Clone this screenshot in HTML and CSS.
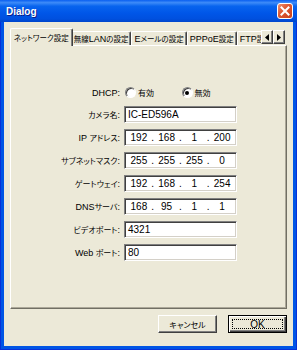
FILE: index.html
```html
<!DOCTYPE html>
<html lang="ja">

<head>
    <meta charset="UTF-8">
    <title>Dialog</title>
    <link rel="stylesheet" href="styles.css">
</head>

<body>
    <div class="window">
        <div class="titlebar">
            <span class="title">Dialog</span>
            <span class="close">
                <svg width="14" height="14" viewBox="0 0 14 14">
                    <path d="M3.5 3.5 L10.5 10.5 M10.5 3.5 L3.5 10.5" stroke="#fff" stroke-width="2" stroke-linecap="square" />
                </svg>
            </span>
        </div>

        <div class="client">
            <div class="tabstrip">
                <div class="tabs">
                    <div class="tab active"><span class="jp">ネットワーク設定</span></div>
                    <div class="tab"><span class="jp">無線</span>LAN<span class="jp">の設定</span></div>
                    <div class="tab">E<span class="jp">メールの設定</span></div>
                    <div class="tab">PPPoE<span class="jp">設定</span></div>
                    <div class="tab">FTP<span class="jp">設定</span></div>
                </div>
                <div class="scroller">
                    <span class="arrow"><svg width="4" height="7" viewBox="0 0 4 7"><path d="M4 0 L0 3.5 L4 7 Z" /></svg></span>
                    <span class="arrow"><svg width="4" height="7" viewBox="0 0 4 7"><path d="M0 0 L4 3.5 L0 7 Z" /></svg></span>
                </div>
            </div>

            <div class="panel">
                <div class="form">
                    <div class="label">DHCP:</div>
                    <div class="radios">
                        <span class="choice"><span class="radio"></span><span class="jp">有効</span></span>
                        <span class="choice"><span class="radio checked"></span><span class="jp">無効</span></span>
                    </div>

                    <div class="label"><span class="jp">カメラ名</span>:</div>
                    <div class="field">IC-ED596A</div>

                    <div class="label">IP <span class="jp">アドレス</span>:</div>
                    <div class="field ip"><span>192</span><i>.</i><span>168</span><i>.</i><span>1</span><i>.</i><span>200</span></div>

                    <div class="label"><span class="jp">サブネットマスク</span>:</div>
                    <div class="field ip"><span>255</span><i>.</i><span>255</span><i>.</i><span>255</span><i>.</i><span>0</span></div>

                    <div class="label"><span class="jp">ゲートウェイ</span>:</div>
                    <div class="field ip"><span>192</span><i>.</i><span>168</span><i>.</i><span>1</span><i>.</i><span>254</span></div>

                    <div class="label">DNS<span class="jp">サーバ</span>:</div>
                    <div class="field ip"><span>168</span><i>.</i><span>95</span><i>.</i><span>1</span><i>.</i><span>1</span></div>

                    <div class="label"><span class="jp">ビデオポート</span>:</div>
                    <div class="field">4321</div>

                    <div class="label">Web <span class="jp">ポート</span>:</div>
                    <div class="field">80</div>
                </div>
            </div>

            <div class="actions">
                <button class="btn"><span class="jp">キャンセル</span></button>
                <button class="btn default"><span class="focus">OK</span></button>
            </div>
        </div>
    </div>
</body>

</html>
```

FILE: styles.css
```css
body {
    margin: 0;
    font-family: "Liberation Sans", "Noto Sans CJK JP", sans-serif;
    font-size: 9px;
    color: #000;
}

/* MS UI Gothic style: small, proportional kana */
.jp {
    font-family: "Noto Sans CJK JP", sans-serif;
    font-size: 8px;
    font-feature-settings: "palt";
}

.window {
    width: 297px;
    height: 350px;
    display: flex;
    flex-direction: column;
    background: #0055e5;
    box-shadow: inset 1px 0 #0831d9, inset -1px 0 #0831d9, inset 0 -1px #0831d9;
}

/* title bar */
.titlebar {
    height: 22px;
    flex: none;
    display: flex;
    align-items: center;
    justify-content: space-between;
    padding: 0 4px 0 6px;
    background: linear-gradient(#0a5ff0 0%, #3d8bf8 12%, #0864ee 28%, #0056e8 60%, #0050df 85%, #0046cc 100%);
}

.title {
    color: #fff;
    font-weight: bold;
    font-size: 10px;
    text-shadow: 1px 1px #0a1e8c;
}

.close {
    width: 14px;
    height: 14px;
    border: 1px solid #fff;
    border-radius: 3px;
    background: linear-gradient(135deg, #f09070 0%, #dd5a35 40%, #c8401c 100%);
    display: flex;
    align-items: center;
    justify-content: center;
}

/* client area */
.client {
    flex: 1;
    margin: 0 4px 4px;
    background: #ece9d8;
    padding: 6px 6px 0;
    display: flex;
    flex-direction: column;
}

/* tabs */
.tabstrip {
    position: relative;
    z-index: 1;
    height: 18px;
    margin-bottom: -1px;
    display: flex;
    align-items: flex-end;
}

.tabs {
    flex: 1;
    min-width: 0;
    height: 100%;
    padding-left: 2px;
    display: flex;
    align-items: flex-end;
    overflow: hidden;
    white-space: nowrap;
}

.tab {
    flex: none;
    height: 13px;
    margin-bottom: 1px;
    padding: 0 2px;
    display: flex;
    align-items: center;
    border-top: 1px solid #fff;
    border-left: 1px solid #fff;
    border-right: 1px solid #404040;
    border-radius: 2px 2px 0 0;
    box-shadow: inset -1px 0 #808080;
    background: #ece9d8;
}

.tab .jp {
    font-size: 7.5px;
}

.tab.active {
    height: 17px;
    margin: 0 -2px;
    padding: 0 3px;
    position: relative;
    z-index: 1;
}

.scroller {
    flex: none;
    margin: 0 2px 2px 0;
    display: flex;
}

.arrow {
    width: 10px;
    height: 12px;
    border: 1px solid;
    border-color: #fff #404040 #404040 #fff;
    box-shadow: inset -1px -1px #808080;
    background: #ece9d8;
    display: flex;
    align-items: center;
    justify-content: center;
}

/* panel */
.panel {
    height: 264px;
    flex: none;
    box-sizing: border-box;
    border: 1px solid;
    border-color: #fff #716f64 #716f64 #fff;
    box-shadow: inset -1px -1px #aca899;
}

.form {
    display: grid;
    grid-template-columns: 109px 113px;
    grid-template-rows: 15px;
    grid-auto-rows: 17px;
    column-gap: 4px;
    row-gap: 6px;
    padding-top: 39px;
}

.label {
    align-self: center;
    text-align: right;
    white-space: nowrap;
}

.radios {
    display: flex;
    align-items: center;
}

.choice {
    width: 70px;
    display: flex;
    align-items: center;
    gap: 2px;
}

.radio {
    width: 11px;
    height: 11px;
    margin-left: 1px;
    box-sizing: border-box;
    border-radius: 50%;
    border: 1px solid;
    border-color: #808080 #fff #fff #808080;
    box-shadow: inset 1px 1px #404040;
    background: #fff;
    display: flex;
    align-items: center;
    justify-content: center;
}

.radio.checked::after {
    content: "";
    width: 4px;
    height: 4px;
    border-radius: 50%;
    background: #000;
}

.field {
    box-sizing: border-box;
    border: 1px solid;
    border-color: #808080 #fff #fff #808080;
    box-shadow: inset 1px 1px #404040, inset -1px -1px #d4d0c8;
    background: #fff;
    padding-left: 3px;
    font-size: 10px;
    display: flex;
    align-items: center;
}

.field.ip {
    padding: 0 2px;
}

.ip span {
    flex: 1;
    text-align: center;
}

.ip i {
    font-style: normal;
    width: 4px;
    text-align: center;
}

/* buttons */
.actions {
    display: flex;
    justify-content: flex-end;
    gap: 11px;
    margin-top: 6px;
}

.btn {
    width: 59px;
    height: 18px;
    padding: 0;
    font: inherit;
    font-size: 10px;
    background: #ece9d8;
    border: 1px solid;
    border-color: #fff #404040 #404040 #fff;
    box-shadow: inset -1px -1px #808080;
    display: flex;
    align-items: center;
    justify-content: center;
}

.btn.default {
    border: 1px solid #000;
    box-shadow: inset 1px 1px #fff, inset -1px -1px #404040, inset -2px -2px #808080;
    padding: 3px;
}

.focus {
    flex: 1;
    align-self: stretch;
    border: 1px dotted #000;
    display: flex;
    align-items: center;
    justify-content: center;
}
```
